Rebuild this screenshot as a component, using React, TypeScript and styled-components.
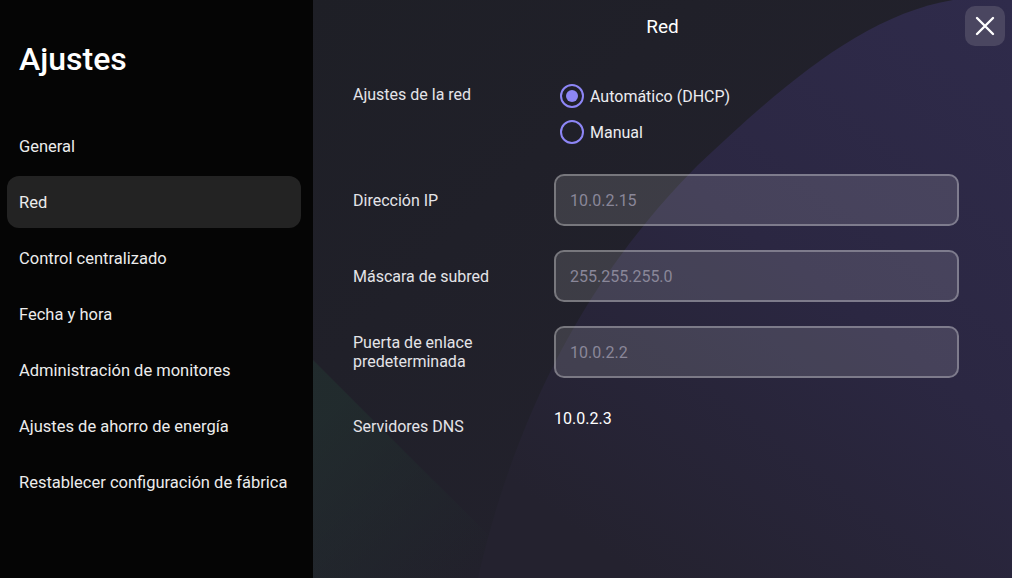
import React from 'react';
import styled, { createGlobalStyle } from 'styled-components';

const GlobalStyle = createGlobalStyle`
  html, body {
    margin: 0;
    padding: 0;
    background: #050505;
  }
  body {
    font-family: Roboto, "Liberation Sans", sans-serif;
  }
`;

const Screen = styled.div`
  display: flex;
  width: 1012px;
  height: 578px;
  overflow: hidden;
`;

const Sidebar = styled.aside`
  width: 313px;
  flex-shrink: 0;
  background: #050505;
  padding-top: 40px;
  box-sizing: border-box;
`;

const SidebarTitle = styled.h1`
  margin: 0 0 42px 19px;
  font-size: 32px;
  line-height: 38px;
  font-weight: 500;
  color: #ffffff;
`;

const NavList = styled.nav`
  display: flex;
  flex-direction: column;
  gap: 4px;
  padding: 0 12px 0 7px;
`;

const NavItem = styled.div<{ $active?: boolean }>`
  display: flex;
  align-items: center;
  height: 52px;
  padding-left: 12px;
  border-radius: 12px;
  background: ${p => (p.$active ? '#232323' : 'transparent')};
  color: #ececec;
  font-size: 16.5px;
`;

const Main = styled.main`
  position: relative;
  flex: 1;
  background: linear-gradient(135deg, #1e1f26 0%, #22212c 60%, #25222f 100%);
  overflow: hidden;
`;

const Backdrop = styled.svg`
  position: absolute;
  inset: 0;
  width: 100%;
  height: 100%;
  z-index: 0;
`;

const Content = styled.div`
  position: relative;
  z-index: 1;
  height: 100%;
`;

const Header = styled.header`
  display: flex;
  justify-content: center;
  align-items: center;
  height: 52px;
`;

const HeaderTitle = styled.h2`
  margin: 0;
  font-size: 19px;
  font-weight: 400;
  color: #ffffff;
`;

const CloseButton = styled.button`
  position: absolute;
  top: 6px;
  right: 7px;
  width: 40px;
  height: 40px;
  display: flex;
  align-items: center;
  justify-content: center;
  padding: 0;
  border: none;
  border-radius: 10px;
  background: #4a4660;
  cursor: pointer;
`;

const Form = styled.div`
  display: grid;
  grid-template-columns: 201px 405px;
  row-gap: 24px;
  align-items: center;
  padding: 31px 0 0 40px;
`;

const Label = styled.div<{ $top?: number }>`
  align-self: ${p => (p.$top !== undefined ? 'start' : 'center')};
  padding-top: ${p => p.$top ?? 0}px;
  font-size: 16px;
  line-height: 19px;
  color: #e4e4e8;
`;

const RadioGroup = styled.div`
  display: flex;
  flex-direction: column;
  gap: 12px;
  padding: 1px 0 6px 6px;
`;

const RadioRow = styled.label`
  display: flex;
  align-items: center;
  gap: 6px;
  height: 24px;
  font-size: 16px;
  color: #ececf0;
`;

const RadioCircle = styled.span<{ $checked?: boolean }>`
  width: 24px;
  height: 24px;
  box-sizing: border-box;
  border: 2px solid #8d86f6;
  border-radius: 50%;
  display: flex;
  align-items: center;
  justify-content: center;

  &::after {
    content: '';
    width: 12px;
    height: 12px;
    border-radius: 50%;
    background: ${p => (p.$checked ? '#8d86f6' : 'transparent')};
  }
`;

const Field = styled.div`
  height: 52px;
  box-sizing: border-box;
  border: 2px solid rgba(255, 255, 255, 0.3);
  border-radius: 10px;
  background: rgba(255, 255, 255, 0.13);
  display: flex;
  align-items: center;
  padding-left: 14px;
  font-size: 16px;
  color: #8a8799;
`;

const Value = styled.div`
  align-self: start;
  padding-top: 7px;
  font-size: 16px;
  line-height: 20px;
  color: #ffffff;
`;

const navItems = [
  'General',
  'Red',
  'Control centralizado',
  'Fecha y hora',
  'Administración de monitores',
  'Ajustes de ahorro de energía',
  'Restablecer configuración de fábrica',
];

const fields = [
  { label: 'Dirección IP', value: '10.0.2.15' },
  { label: 'Máscara de subred', value: '255.255.255.0' },
  { label: 'Puerta de enlace predeterminada', value: '10.0.2.2' },
];

const App: React.FC = () => (
  <Screen>
    <GlobalStyle />
    <Sidebar>
      <SidebarTitle>Ajustes</SidebarTitle>
      <NavList>
        {navItems.map(item => (
          <NavItem key={item} $active={item === 'Red'}>{item}</NavItem>
        ))}
      </NavList>
    </Sidebar>
    <Main>
      <Backdrop viewBox="0 0 699 578" preserveAspectRatio="none">
        <defs>
          <linearGradient id="wave" x1="1" y1="0" x2="0.3" y2="1">
            <stop offset="0" stopColor="#2f2b4b" />
            <stop offset="0.5" stopColor="#2b2742" />
            <stop offset="1" stopColor="#24222f" />
          </linearGradient>
          <linearGradient id="teal" x1="0" y1="0.3" x2="0.7" y2="1">
            <stop offset="0" stopColor="#22302f" stopOpacity="0.7" />
            <stop offset="1" stopColor="#22302f" stopOpacity="0" />
          </linearGradient>
        </defs>
        <path d="M0 360 L120 480 L220 578 L0 578 Z" fill="url(#teal)" />
        <path
          d="M699 0 L640 0 C550 15 470 85 385 165 C300 250 210 380 165 578 L699 578 Z"
          fill="url(#wave)"
        />
      </Backdrop>
      <Content>
        <Header>
          <HeaderTitle>Red</HeaderTitle>
        </Header>
        <CloseButton aria-label="Cerrar">
          <svg width="20" height="20" viewBox="0 0 20 20">
            <path d="M2 2 L18 18 M18 2 L2 18" stroke="#ffffff" strokeWidth="2.4" strokeLinecap="round" />
          </svg>
        </CloseButton>
        <Form>
          <Label $top={2}>Ajustes de la red</Label>
          <RadioGroup>
            <RadioRow>
              <RadioCircle $checked />
              Automático (DHCP)
            </RadioRow>
            <RadioRow>
              <RadioCircle />
              Manual
            </RadioRow>
          </RadioGroup>
          {fields.map(f => (
            <React.Fragment key={f.label}>
              <Label>{f.label}</Label>
              <Field>{f.value}</Field>
            </React.Fragment>
          ))}
          <Label $top={15}>Servidores DNS</Label>
          <Value>10.0.2.3</Value>
        </Form>
      </Content>
    </Main>
  </Screen>
);

export default App;
